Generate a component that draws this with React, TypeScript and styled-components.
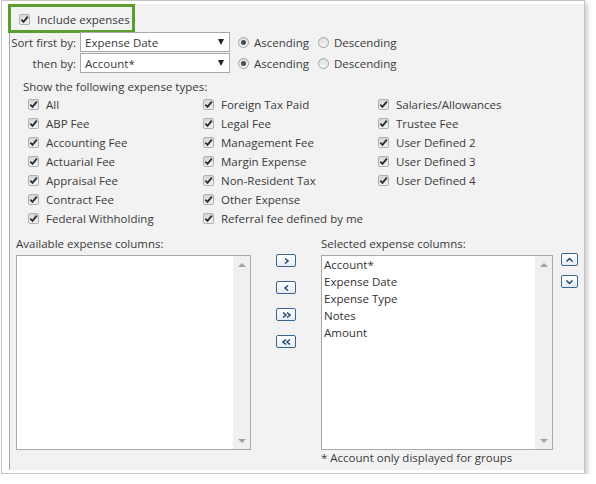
import styled, { createGlobalStyle } from 'styled-components'

const GlobalStyle = createGlobalStyle`
    html, body {
        margin: 0;
        padding: 0;
        background: #ffffff;
    }
    body {
        font-family: "Open Sans", "Noto Sans", sans-serif;
        font-size: 11.5px;
        color: #3a3a3a;
        white-space: nowrap;
    }
`

const Frame = styled.div`
    margin-left: 1px;
    width: 584px;
    height: 474px;
    box-sizing: border-box;
    border: 1px solid #c4c4c4;
    box-shadow: 3px 3px 4px rgba(0, 0, 0, 0.18);
    background: #ffffff;
    padding: 3px 0 3px 7px;
`

const Panel = styled.div`
    height: 100%;
    box-sizing: border-box;
    background: #f2f2f2;
    border-left: 1px solid #a8a8a8;
    display: flex;
    flex-direction: column;
`

const IncludeRow = styled.label`
    margin: 3px 0 0 1px;
    width: 121px;
    height: 23px;
    box-sizing: border-box;
    outline: 3px solid #5d9d2c;
    display: flex;
    align-items: center;
    gap: 7px;
    padding-left: 8px;
    padding-top: 1px;
`

const SortRow = styled.div`
    display: flex;
    align-items: center;
    height: 20px;
    margin-top: ${(p: { first?: boolean }) => (p.first ? '2px' : '1px')};
`

const SortLabel = styled.span`
    width: 70px;
    text-align: right;
    padding-right: 4px;
    box-sizing: border-box;
`

const Select = styled.div`
    width: 150px;
    height: 20px;
    box-sizing: border-box;
    background: #ffffff;
    border: 1px solid #a9a9a9;
    display: flex;
    align-items: center;
    justify-content: space-between;
    padding: 0 5px 0 4px;
`

const Arrow = styled.span`
    width: 0;
    height: 0;
    border-left: 3.5px solid transparent;
    border-right: 3.5px solid transparent;
    border-top: 6px solid #222;
`

const RadioGroup = styled.div`
    display: flex;
    align-items: center;
    margin-left: 8px;
`

const RadioItem = styled.span`
    display: flex;
    align-items: center;
    gap: 5px;
    margin-right: 9px;
`

const RadioCircle = styled.span<{ checked?: boolean }>`
    width: 11px;
    height: 11px;
    box-sizing: border-box;
    border-radius: 50%;
    border: 1px solid #a2a2a2;
    background: linear-gradient(#dedede, #f7f7f7);
    display: flex;
    align-items: center;
    justify-content: center;
    &::after {
        content: '';
        display: ${(p) => (p.checked ? 'block' : 'none')};
        width: 5px;
        height: 5px;
        border-radius: 50%;
        background: #4c4c4c;
    }
`

const SectionTitle = styled.div`
    margin: 6px 0 0 13px;
    line-height: 16px;
`

const TypeGrid = styled.div`
    margin-left: 18px;
    display: grid;
    grid-template-columns: 175px 175px 175px;
    grid-auto-flow: column;
    grid-template-rows: repeat(7, 19px);
`

const TypeItem = styled.label`
    display: flex;
    align-items: center;
    gap: 7px;
`

const Box = styled.span`
    width: 11px;
    height: 11px;
    box-sizing: border-box;
    border: 1px solid #b0b0b0;
    border-radius: 2px;
    background: linear-gradient(#d6d6d6, #f3f3f3);
    display: flex;
    align-items: center;
    justify-content: center;
    flex-shrink: 0;
`

const ColumnsArea = styled.div`
    margin-top: 8px;
    display: flex;
`

const ListBlock = styled.div<{ w: number; left?: number }>`
    width: ${(p) => p.w}px;
    margin-left: ${(p) => p.left ?? 0}px;
    display: flex;
    flex-direction: column;
`

const ListTitle = styled.div`
    line-height: 16px;
    height: 16px;
    margin-bottom: 3px;
`

const ListBox = styled.div`
    height: 195px;
    box-sizing: border-box;
    background: #ffffff;
    border: 1px solid #a9a9a9;
    display: flex;
`

const ListItems = styled.div`
    flex: 1;
    padding: 0 0 0 2px;
    color: #333;
`

const ListItem = styled.div`
    line-height: 17px;
    height: 17px;
`

const ScrollTrack = styled.div`
    width: 17px;
    background: #f0f0f0;
    display: flex;
    flex-direction: column;
    justify-content: space-between;
    align-items: center;
    padding: 7px 0 6px;
    box-sizing: border-box;
`

const ScrollArrow = styled.span<{ up?: boolean }>`
    width: 0;
    height: 0;
    border-left: 4px solid transparent;
    border-right: 4px solid transparent;
    ${(p) => (p.up ? 'border-bottom: 4px solid #a3a3a3;' : 'border-top: 4px solid #a3a3a3;')}
`

const MoveButtons = styled.div<{ w: number; top: number; gap: number; left: number }>`
    width: ${(p) => p.w}px;
    padding-left: ${(p) => p.left}px;
    box-sizing: border-box;
    padding-top: ${(p) => p.top}px;
    display: flex;
    flex-direction: column;
    gap: ${(p) => p.gap}px;
`

const SmallButton = styled.button<{ w: number }>`
    width: ${(p) => p.w}px;
    height: 13px;
    padding: 0;
    border: 1px solid #3a6591;
    border-radius: 2px;
    background: linear-gradient(#ffffff, #e6ecf3);
    display: flex;
    align-items: center;
    justify-content: center;
    color: #2b4f78;
`

const Footnote = styled.div`
    margin: 0;
    line-height: 16px;
`

const Check = () => (
    <Box>
        <svg width="9" height="9" viewBox="0 0 9 9">
            <path d="M1.3 4.6 L3.5 6.9 L7.8 1.6" fill="none" stroke="#2e2e2e" strokeWidth="1.8" />
        </svg>
    </Box>
)

const Chevron = ({ dir, double }: { dir: 'left' | 'right' | 'up' | 'down'; double?: boolean }) => {
    const paths: Record<string, string> = {
        right: 'M2 1.5 L5 4 L2 6.5',
        left: 'M5 1.5 L2 4 L5 6.5',
        up: 'M1.5 5.5 L4.5 2.5 L7.5 5.5',
        down: 'M1.5 2.5 L4.5 5.5 L7.5 2.5',
    }
    if (double) {
        const d = dir === 'right' ? ['M1 1.5 L4 4 L1 6.5', 'M5 1.5 L8 4 L5 6.5'] : ['M4 1.5 L1 4 L4 6.5', 'M8 1.5 L5 4 L8 6.5']
        return (
            <svg width="9" height="8" viewBox="0 0 9 8">
                {d.map((p) => (
                    <path key={p} d={p} fill="none" stroke="#22466e" strokeWidth="1.5" />
                ))}
            </svg>
        )
    }
    const vertical = dir === 'up' || dir === 'down'
    return (
        <svg width={vertical ? 9 : 7} height="8" viewBox={vertical ? '0 0 9 8' : '0 0 7 8'}>
            <path d={paths[dir]} fill="none" stroke="#22466e" strokeWidth="1.5" />
        </svg>
    )
}

const expenseTypes = [
    'All', 'ABP Fee', 'Accounting Fee', 'Actuarial Fee', 'Appraisal Fee', 'Contract Fee', 'Federal Withholding',
    'Foreign Tax Paid', 'Legal Fee', 'Management Fee', 'Margin Expense', 'Non-Resident Tax', 'Other Expense', 'Referral fee defined by me',
    'Salaries/Allowances', 'Trustee Fee', 'User Defined 2', 'User Defined 3', 'User Defined 4',
]

const selectedColumns = ['Account*', 'Expense Date', 'Expense Type', 'Notes', 'Amount']

const SortLine = ({ label, value, first }: { label: string; value: string; first?: boolean }) => (
    <SortRow first={first}>
        <SortLabel>{label}</SortLabel>
        <Select>
            <span>{value}</span>
            <Arrow />
        </Select>
        <RadioGroup>
            <RadioItem><RadioCircle checked />Ascending</RadioItem>
            <RadioItem><RadioCircle />Descending</RadioItem>
        </RadioGroup>
    </SortRow>
)

const App = () => {
    return (
        <>
            <GlobalStyle />
            <Frame>
                <Panel>
                    <IncludeRow>
                        <Check />
                        Include expenses
                    </IncludeRow>

                    <SortLine label="Sort first by:" value="Expense Date" first />
                    <SortLine label="then by:" value="Account*" />

                    <SectionTitle>Show the following expense types:</SectionTitle>
                    <TypeGrid>
                        {expenseTypes.map((t) => (
                            <TypeItem key={t}>
                                <Check />
                                {t}
                            </TypeItem>
                        ))}
                    </TypeGrid>

                    <ColumnsArea>
                        <ListBlock w={235} left={6}>
                            <ListTitle>Available expense columns:</ListTitle>
                            <ListBox>
                                <ListItems />
                                <ScrollTrack>
                                    <ScrollArrow up />
                                    <ScrollArrow />
                                </ScrollTrack>
                            </ListBox>
                        </ListBlock>

                        <MoveButtons w={70} left={25} top={18} gap={14}>
                            <SmallButton w={20}><Chevron dir="right" /></SmallButton>
                            <SmallButton w={20}><Chevron dir="left" /></SmallButton>
                            <SmallButton w={20}><Chevron dir="right" double /></SmallButton>
                            <SmallButton w={20}><Chevron dir="left" double /></SmallButton>
                        </MoveButtons>

                        <ListBlock w={232}>
                            <ListTitle>Selected expense columns:</ListTitle>
                            <ListBox>
                                <ListItems>
                                    {selectedColumns.map((c) => (
                                        <ListItem key={c}>{c}</ListItem>
                                    ))}
                                </ListItems>
                                <ScrollTrack>
                                    <ScrollArrow up />
                                    <ScrollArrow />
                                </ScrollTrack>
                            </ListBox>
                            <Footnote>* Account only displayed for groups</Footnote>
                        </ListBlock>

                        <MoveButtons w={26} left={8} top={17} gap={9}>
                            <SmallButton w={17}><Chevron dir="up" /></SmallButton>
                            <SmallButton w={17}><Chevron dir="down" /></SmallButton>
                        </MoveButtons>
                    </ColumnsArea>
                </Panel>
            </Frame>
        </>
    )
}

export default App
